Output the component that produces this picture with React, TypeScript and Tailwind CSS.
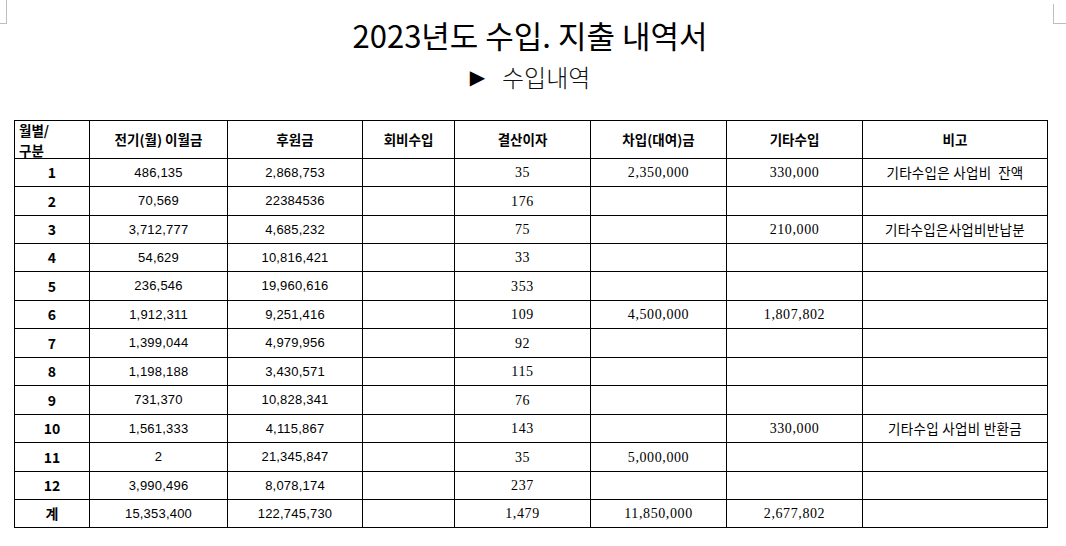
import React from 'react';

const rows: string[][] = [
  ['1', '486,135', '2,868,753', '', '35', '2,350,000', '330,000', '기타수입은 사업비\u00a0 잔액'],
  ['2', '70,569', '22384536', '', '176', '', '', ''],
  ['3', '3,712,777', '4,685,232', '', '75', '', '210,000', '기타수입은사업비반납분'],
  ['4', '54,629', '10,816,421', '', '33', '', '', ''],
  ['5', '236,546', '19,960,616', '', '353', '', '', ''],
  ['6', '1,912,311', '9,251,416', '', '109', '4,500,000', '1,807,802', ''],
  ['7', '1,399,044', '4,979,956', '', '92', '', '', ''],
  ['8', '1,198,188', '3,430,571', '', '115', '', '', ''],
  ['9', '731,370', '10,828,341', '', '76', '', '', ''],
  ['10', '1,561,333', '4,115,867', '', '143', '', '330,000', '기타수입 사업비 반환금'],
  ['11', '2', '21,345,847', '', '35', '5,000,000', '', ''],
  ['12', '3,990,496', '8,078,174', '', '237', '', '', ''],
  ['계', '15,353,400', '122,745,730', '', '1,479', '11,850,000', '2,677,802', ''],
];

const rowH = ['h-[28px]', 'h-[29px]', 'h-[28px]', 'h-[28px]', 'h-[29px]', 'h-[28px]', 'h-[29px]', 'h-[28px]', 'h-[29px]', 'h-[28px]', 'h-[29px]', 'h-[28px]', 'h-[28px]'];

const headers = ['전기(월) 이월금', '후원금', '회비수입', '결산이자', '차입(대여)금', '기타수입', '비고'];

const kr = "font-['Noto_Sans_CJK_KR',sans-serif]";
const sansNum = "font-['Liberation_Sans',sans-serif] text-[13px] tracking-[0.2px] text-[#1a1a1a]";
const serifNum = "font-['Liberation_Serif',serif] text-[14px] tracking-[0.6px] text-[#1a1a1a]";

const cell = 'border-r border-b border-black flex items-center justify-center text-black';

export default function App() {
  return (
    <div className="relative w-[1066px] h-[546px] bg-white overflow-hidden">
      <div className="absolute left-0 top-0 w-[7px] h-[24px] border-r border-b border-[#bdbdbd]" />
      <div className="absolute left-[1053px] top-[4px] w-[13px] h-[20px] border-l border-b border-[#bdbdbd]" />

      <div className="flex flex-col pt-[15px]">
        <h1 className={`${kr} text-center text-[31px] leading-[40px] text-black pr-[6px]`}>
          2023년도 수입. 지출 내역서
        </h1>
        <div className="flex justify-center items-center gap-[17px] mt-[7px] pr-[6px]">
          <span className="text-[20px] leading-[30px] text-black font-['DejaVu_Sans',sans-serif]">▶</span>
          <span className={`${kr} text-[24px] leading-[30px] font-light text-[#111]`}>수입내역</span>
        </div>

        <div className="ml-[14px] mt-[28px] w-[1034px] border-l border-t border-black grid grid-cols-[75px_138px_135px_92px_136px_136px_136px_185px]">
          <div className={`border-r border-b border-black h-[38px] flex flex-col justify-center pl-[4px] ${kr} font-bold text-[13.5px] leading-[20px]`}>
            <span>월별/</span>
            <span>구분</span>
          </div>
          {headers.map((h) => (
            <div key={h} className={`${cell} h-[38px] ${kr} font-bold text-[13.5px]`}>
              {h}
            </div>
          ))}
          {rows.map((r, i) => (
            <React.Fragment key={r[0]}>
              {r.map((v, j) => {
                let f = sansNum;
                if (j === 0) f = `${kr} font-bold text-[14px]`;
                else if (j >= 4 && j <= 6) f = serifNum;
                else if (j === 7) f = `${kr} text-[13.5px] tracking-[0.3px] text-[#1a1a1a]`;
                return (
                  <div key={j} className={`${cell} ${rowH[i]} ${f}`}>
                    {v}
                  </div>
                );
              })}
            </React.Fragment>
          ))}
        </div>
      </div>
    </div>
  );
}
